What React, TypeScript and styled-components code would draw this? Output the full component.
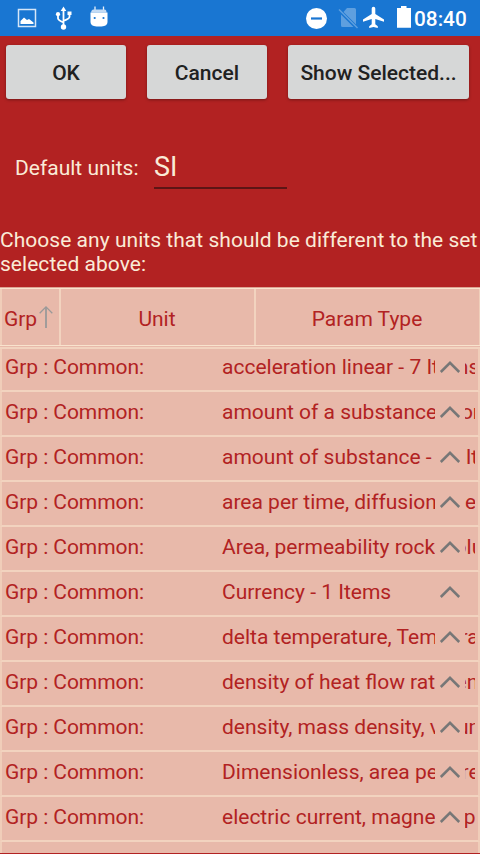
import React from "react";
import styled, { createGlobalStyle } from "styled-components";

const Global = createGlobalStyle`
  * { box-sizing: border-box; }
  body { margin: 0; background: #b22222; font-family: Roboto, sans-serif; }
`;

const Screen = styled.main`
  width: 480px;
  height: 854px;
  overflow: hidden;
  display: flex;
  flex-direction: column;
  background: #b22222;
  color: #faebd7;
  font-size: 21px;
  line-height: 24px;
  white-space: nowrap;
`;

const StatusBar = styled.header`
  flex: none;
  height: 36px;
  display: flex;
  justify-content: space-between;
  background: #1976d2;
  color: #fff;
`;

const StatusIcons = styled.div`
  display: flex;
  svg { display: block; }
`;

const Clock = styled.time`
  width: 66px;
  font-size: 20.8px;
  font-weight: 500;
  line-height: 38px;
`;

const ButtonBar = styled.div`
  flex: none;
  height: 63px;
  padding: 9px 11px 0 6px;
  display: flex;
  gap: 21px;
`;

const Button = styled.button<{ $width: number }>`
  width: ${(p) => p.$width}px;
  height: 54px;
  padding: 2px 0 0;
  border: 0;
  border-radius: 3px;
  background: #d6d7d7;
  color: #212121;
  box-shadow: 0 1px 3px rgba(0, 0, 0, 0.35);
  font: 500 21px/24px Roboto, sans-serif;
  white-space: nowrap;
`;

const UnitsField = styled.label`
  flex: none;
  height: 90px;
  margin-top: 37px;
  padding-left: 15px;
  display: flex;
  align-items: flex-start;
`;

const FieldLabel = styled.span`
  width: 139px;
  padding-top: 20px;
`;

const FieldValue = styled.span`
  width: 133px;
  height: 53px;
  padding-top: 15px;
  border-bottom: 2px solid #5d1515;
  font-size: 27px;
  line-height: 32px;
`;

const Hint = styled.p`
  flex: none;
  height: 61px;
  margin: 0;
  padding-top: 2px;
  letter-spacing: 0.035px;
`;

const Grid = styled.section`
  flex: none;
  height: 566px;
  overflow: hidden;
  background: #e8b9aa;
  color: #b22222;
`;

const HeaderRow = styled.div`
  height: 62px;
  display: grid;
  grid-template-columns: 61px 195px 224px;
  border-top: 1px solid #dda493;
  border-bottom: 2px solid #f2d3bf;
`;

const HeaderCell = styled.div<{ $last?: boolean }>`
  height: 58px;
  display: flex;
  align-items: center;
  justify-content: center;
  padding-top: 4px;
  padding-right: ${(p) => (p.$last ? 2 : 3)}px;
  border-top: 1px solid #f9e3cd;
  border-bottom: 1px solid #f9e3cd;
  box-shadow: ${(p) => (p.$last ? "inset -1px 0 #f0cfbb" : "inset -2px 0 #f2d3bf")};
`;

const SortHeader = styled(HeaderCell)`
  justify-content: flex-start;
  padding-left: 4px;
  gap: 2px;
  letter-spacing: -0.1px;
  box-shadow: inset -2px 0 #f2d3bf, inset 2px 0 #f0cdb9;
  svg { margin-top: -4px; }
`;

const Cell = styled.span`
  height: 43px;
  padding-top: 8px;
  overflow: hidden;
`;

const GroupCell = styled(Cell)`
  letter-spacing: -0.07px;
`;

const Toggle = styled.button`
  position: absolute;
  top: 5px;
  right: 13px;
  width: 30px;
  height: 30px;
  padding: 0;
  border: 0;
  background: #e8b9aa;
  svg { display: block; }
`;

const GroupRow = styled.div`
  height: 45px;
  padding: 0 3px;
  display: grid;
  grid-template-columns: 217px 253px;
  align-items: start;
  position: relative;
  border-left: 2px solid #f0cdb9;
  border-right: 2px solid #f0cdb9;
  border-bottom: 2px solid #f2d3bf;
`;

const RowList = styled.div`
  ${GroupRow}:first-child { height: 43px; }
  ${GroupRow}:first-child ${Cell} { padding-top: 6px; height: 41px; }
  ${GroupRow}:first-child ${Toggle} { top: 3px; }
`;

const groups = [
  "acceleration linear - 7 Items",
  "amount of a substance mor",
  "amount of substance - 12 Items",
  "area per time, diffusion coefficient",
  "Area, permeability rock, volume",
  "Currency - 1 Items",
  "delta temperature, Temperature",
  "density of heat flow rate, energy",
  "density, mass density, volume",
  "Dimensionless, area per area",
  "electric current, magnetic potential",
  "",
];

const NotificationIcons = () => (
  <svg width="120" height="36" fill="#fff" aria-hidden="true">
    <path d="M18.5 9.5h17v17h-17z" fill="none" stroke="#d5e6f8" strokeWidth="1.5" />
    <path d="M20.5 24v-3l3.500-3.500 3 2.500 2-1 4.500 3.500V24z" />
    <path d="M63.500 27V10M58 15v3.500q0 1.500 5.500 4M69.500 14v3q0 1.500-6 4" stroke="#fff" strokeWidth="1.8" fill="none" />
    <circle cx="63.500" cy="27" r="2.700" />
    <path d="M63.500 6.500 66.300 11h-5.600zM67.500 11.500h4v3.500h-4z" />
    <circle cx="58" cy="14.200" r="2.100" />
    <path d="M95 6.500v4M103.500 6.500v4" stroke="#e8f1fb" strokeWidth="1.300" />
    <path d="M93.500 9.500h11q2 0 2 3h-15.500q.5-3 2.500-3z" fill="#c4dbf4" />
    <path d="M90.500 12.600h17v9.400q0 4-6 4.500h-5q-6-.5-6-4.500z" />
    <circle cx="94.700" cy="18" r="1.100" fill="#1976d2" />
    <circle cx="103.500" cy="18" r="1.100" fill="#1976d2" />
  </svg>
);

const SystemIcons = () => (
  <svg width="114" height="36" viewBox="300 0 114 36" fill="#fff" aria-hidden="true">
    <circle cx="316.500" cy="18.500" r="10.500" />
    <path d="M311 17.400h11v2.200h-11z" fill="#1976d2" />
    <path d="M347 8h7.500q1.500 0 1.500 1.500v15L343.500 12zM341 14.500 353.500 27H342.500q-1.500 0-1.500-1.500z" fill="#5e9fdf" />
    <path d="M339 9.500 357.500 28" stroke="#5e9fdf" strokeWidth="1.500" />
    <path d="M384 21.800v-2.200l-8.700-5.500V8.500a1.800 1.800 0 0 0-3.600 0v5.600L363 19.600v2.200l8.700-2.700v5.200l-2.500 2v1.800l4.300-1.200 4.300 1.200V26.300l-2.500-2v-5.200z" />
    <path d="M401 6h5.500v2H411v19.800h-14V8h4z" />
  </svg>
);

const SortArrow = () => (
  <svg width="14" height="24" fill="none" stroke="#999" aria-hidden="true">
    <path d="M7 2v21" strokeWidth="1.800" />
    <path d="M.7 8.200 7 1.900l6.300 6.300" strokeWidth="1.300" />
  </svg>
);

const Chevron = () => (
  <svg width="30" height="30" fill="none" stroke="#777" strokeWidth="2.500" aria-hidden="true">
    <path d="M5.800 20 15 10.800 24.200 20" />
  </svg>
);

export default function App() {
  return (
    <>
      <Global />
      <Screen>
        <StatusBar>
          <StatusIcons><NotificationIcons /></StatusIcons>
          <StatusIcons><SystemIcons /><Clock>08:40</Clock></StatusIcons>
        </StatusBar>
        <ButtonBar>
          <Button $width={120}>OK</Button>
          <Button $width={120}>Cancel</Button>
          <Button $width={181}>Show Selected...</Button>
        </ButtonBar>
        <UnitsField>
          <FieldLabel>Default units:</FieldLabel>
          <FieldValue>SI</FieldValue>
        </UnitsField>
        <Hint>
          Choose any units that should be different to the set
          <br />
          selected above:
        </Hint>
        <Grid>
          <HeaderRow>
            <SortHeader>Grp<SortArrow /></SortHeader>
            <HeaderCell>Unit</HeaderCell>
            <HeaderCell $last>Param Type</HeaderCell>
          </HeaderRow>
          <RowList>
            {groups.map((name) => (
              <GroupRow key={name}>
                <GroupCell>{name && "Grp : Common:"}</GroupCell>
                <Cell>{name}</Cell>
                {name && <Toggle aria-label="Collapse group"><Chevron /></Toggle>}
              </GroupRow>
            ))}
          </RowList>
        </Grid>
      </Screen>
    </>
  );
}
